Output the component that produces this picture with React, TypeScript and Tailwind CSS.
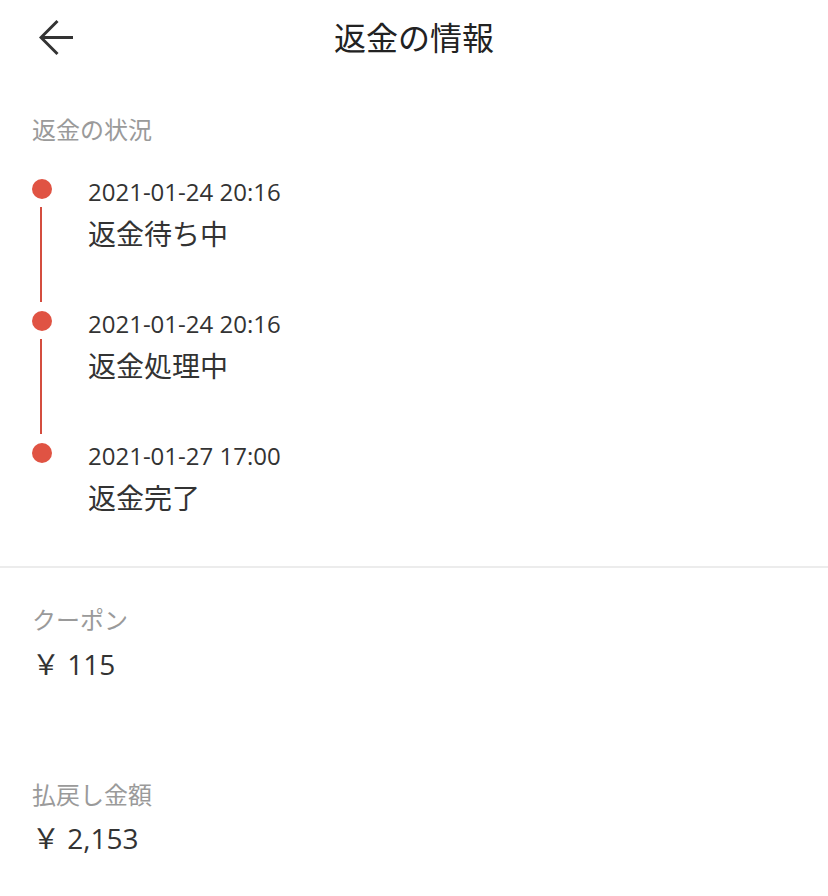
import React from "react";

const font = { fontFamily: '"Open Sans", "Noto Sans CJK JP", sans-serif' };

type Step = { date: string; label: string };

const steps: Step[] = [
  { date: "2021-01-24 20:16", label: "返金待ち中" },
  { date: "2021-01-24 20:16", label: "返金処理中" },
  { date: "2021-01-27 17:00", label: "返金完了" },
];

function BackArrow() {
  return (
    <svg width="40" height="40" viewBox="0 0 40 40" fill="none" className="block">
      <path
        d="M18.5 3 L2 19.5 L18.5 36 M2 19.5 H34"
        stroke="#333333"
        strokeWidth="3"
        strokeLinecap="butt"
        strokeLinejoin="miter"
      />
    </svg>
  );
}

export default function App() {
  return (
    <div className="w-[828px] h-[896px] bg-white overflow-hidden" style={font}>
      {/* Header */}
      <div className="relative h-[76px] flex items-center justify-center">
        <div className="absolute left-[39px] top-[18px]">
          <BackArrow />
        </div>
        <div className="text-[32px] leading-[40px] text-[#222222]">返金の情報</div>
      </div>

      {/* Status section */}
      <div className="pl-8 pt-[39px]">
        <div className="text-[24px] leading-[30px] text-[#9a9a9a]">返金の状況</div>
        <div className="mt-[34px] flex flex-col">
          {steps.map((s, i) => {
            const last = i === steps.length - 1;
            return (
              <div key={i} className={`flex ${last ? "" : "h-[132px]"}`}>
                <div className="w-[20px] flex flex-col items-start">
                  <div className="w-[20px] h-[20px] rounded-full bg-[#e05343]" />
                  {!last && <div className="ml-[8px] mt-[8px] w-[2px] h-[95px] bg-[#d44d3f]" />}
                </div>
                <div className="ml-[36px] flex flex-col">
                  <div className="text-[24px] leading-[26px] text-[#333333]">{s.date}</div>
                  <div className="mt-3 text-[28px] leading-[34px] text-[#333333]">{s.label}</div>
                </div>
              </div>
            );
          })}
        </div>
      </div>

      {/* Divider */}
      <div className="mt-[51px] h-[2px] bg-[#ececec]" />

      {/* Amounts */}
      <div className="pl-8 pt-[37px]">
        <div className="text-[24px] leading-[30px] text-[#9a9a9a]">クーポン</div>
        <div className="mt-3 text-[28px] leading-[34px] text-[#333333]">￥ 115</div>
        <div className="mt-[99px] text-[24px] leading-[30px] text-[#9a9a9a]">払戻し金額</div>
        <div className="mt-[11px] text-[28px] leading-[34px] text-[#333333]">￥ 2,153</div>
      </div>
    </div>
  );
}
